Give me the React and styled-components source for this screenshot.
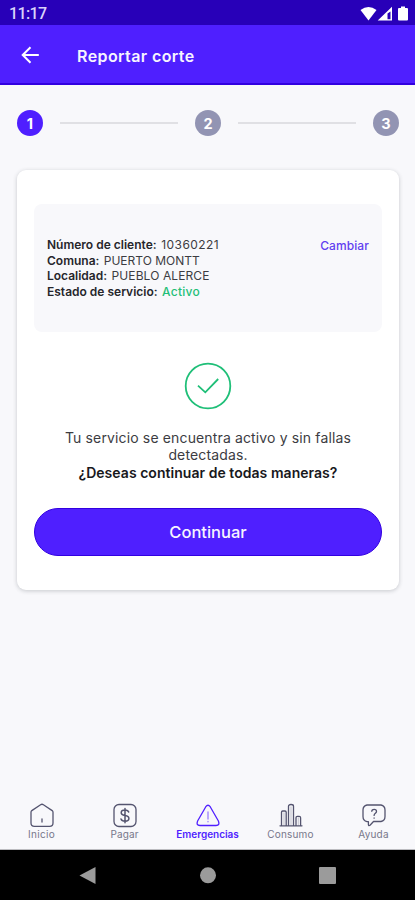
import React from 'react';
import styled, { createGlobalStyle } from 'styled-components';

const color = {
  primary: '#4f1fff',
  primaryDark: '#2800b8',
  edge: '#3200e0',
  green: '#1fbf78',
  background: '#f8f8fb',
  muted: '#9294b3',
  ink: '#3c3c42',
  icon: '#54546f',
};

const GlobalStyle = createGlobalStyle`
  * {
    box-sizing: border-box;
  }

  body {
    margin: 0;
    background: ${color.background};
    font-family: Inter, 'Liberation Sans', sans-serif;
  }
`;

const Screen = styled.div`
  display: flex;
  flex-direction: column;
  width: 415px;
  height: 900px;
  overflow: hidden;
  background: ${color.background};
`;

const StatusBar = styled.div`
  display: flex;
  justify-content: space-between;
  align-items: center;
  height: 25px;
  padding: 2px 7px 0 9px;
  background: ${color.primaryDark};
`;

const Clock = styled.span`
  color: #d9d2fa;
  font: 500 16px/20px Roboto, sans-serif;
  letter-spacing: -0.6px;
`;

const Header = styled.header`
  display: flex;
  align-items: center;
  height: 60px;
  padding: 1px 21px 0;
  background: ${color.primary};
  border-bottom: 2px solid ${color.edge};
`;

const BackButton = styled.button`
  display: flex;
  width: 56px;
  padding: 0;
  border: 0;
  background: none;
`;

const Title = styled.h1`
  margin: 2px 0 0;
  color: #f7f4ff;
  font-size: 16px;
  font-weight: 600;
  letter-spacing: 0.4px;
`;

const Content = styled.main`
  flex: 1;
  padding: 25px 16px 0 17px;
`;

const Stepper = styled.div`
  display: flex;
  align-items: center;
  height: 26px;
`;

const Step = styled.span`
  display: flex;
  justify-content: center;
  align-items: center;
  width: 26px;
  height: 26px;
  border-radius: 50%;
  background: ${({ $active }) => ($active ? color.primary : color.muted)};
  color: #fff;
  font-size: 14.5px;
  font-weight: 700;
`;

const StepLine = styled.span`
  flex: 1;
  height: 2px;
  margin: 0 17px;
  background: #e0e0e4;
`;

const Card = styled.section`
  display: flex;
  flex-direction: column;
  align-items: center;
  height: 420px;
  margin-top: 34px;
  padding: 34px 17px 0;
  border-radius: 9px;
  background: #fff;
  box-shadow: 0 1px 4px rgba(40, 50, 60, 0.24);
`;

const ServiceInfo = styled.div`
  display: flex;
  justify-content: space-between;
  align-items: flex-start;
  width: 100%;
  height: 128px;
  padding: 33px 13px 0;
  border-radius: 8px;
  background: ${color.background};
`;

const InfoLine = styled.p`
  margin: 0;
  color: ${color.ink};
  font-size: 12px;
  line-height: 15.7px;
  letter-spacing: ${({ $spacing }) => $spacing || 0}px;
  white-space: nowrap;

  b {
    margin-right: 1px;
    color: #26262b;
    font-weight: 600;
    letter-spacing: 0;
  }
`;

const Active = styled.span`
  color: ${color.green};
  font-weight: 500;
  letter-spacing: 0.3px;
`;

const ChangeLink = styled.a`
  color: #6240f0;
  font-size: 12px;
  font-weight: 500;
  line-height: 17px;
  letter-spacing: 0.1px;
`;

const CheckIcon = styled.svg`
  width: 48px;
  height: 48px;
  margin-top: 30px;
`;

const Message = styled.p`
  margin: 19px 0 0;
  color: ${color.ink};
  font-size: 14px;
  line-height: 17.3px;
  letter-spacing: 0.14px;
  text-align: center;
  white-space: nowrap;

  strong {
    color: #18181c;
    font-weight: 600;
    letter-spacing: 0.04px;
  }
`;

const ContinueButton = styled.button`
  width: 100%;
  height: 48px;
  margin-top: 27px;
  padding: 1px 0 0;
  border: 1px solid ${color.edge};
  border-radius: 24px;
  background: ${color.primary};
  color: #f7f4ff;
  font: 500 16.5px Inter, sans-serif;
`;

const TabBar = styled.nav`
  display: grid;
  grid-template-columns: repeat(5, 1fr);
  height: 48px;
  border-bottom: 1px solid #bcbcc0;
`;

const Tab = styled.a`
  display: flex;
  flex-direction: column;
  align-items: center;
  padding-top: 1px;
  color: ${({ $active }) => ($active ? color.primary : color.icon)};
`;

const TabIcon = styled.svg`
  width: 26px;
  height: 26px;
  fill: none;
  stroke: currentColor;
  stroke-width: 1.3;
  stroke-linecap: round;
  stroke-linejoin: round;
`;

const TabLabel = styled.span`
  color: ${({ $active }) => ($active ? color.primary : '#77778a')};
  font-size: 10px;
  font-weight: ${({ $active }) => ($active ? 600 : 400)};
  line-height: 11px;
  letter-spacing: ${({ $spacing }) => $spacing}px;
`;

const SystemBar = styled.div`
  display: flex;
  justify-content: center;
  height: 50px;
  background: #000;
`;

const tabs = [
  {
    label: 'Inicio',
    spacing: 0.3,
    icon: (
      <>
        <path d="M2 9.2Q2 8.2 2.8 7.6L11.6 1.7Q13 .8 14.4 1.7L23.2 7.6Q24 8.2 24 9.2V20Q24 23.4 20.6 23.4H5.4Q2 23.4 2 20Z" />
        <path d="M13 16v3" />
      </>
    ),
  },
  {
    label: 'Pagar',
    spacing: 0.1,
    icon: (
      <>
        <rect x="2" y="1.5" width="22" height="22" rx="5" />
        <path strokeWidth="1.5" d="M16.7 9.1C16.2 7.7 15 7.1 13 7.1c-2.3 0-3.8 1-3.8 2.7 0 1.8 1.5 2.4 3.8 2.8s3.9 1 3.9 2.9c0 1.7-1.6 2.7-3.9 2.7-2.2 0-3.5-.8-4-2.2M13 5.4v14.4" />
      </>
    ),
  },
  {
    label: 'Emergencias',
    spacing: 0,
    active: true,
    icon: (
      <>
        <path d="M10.8 3.7Q13 .8 15.2 3.7L23.4 18Q25.2 22.5 21 22.5H5Q.8 22.5 2.6 18Z" />
        <path opacity=".55" d="M13 9v7M13 18.3v.5" />
      </>
    ),
  },
  {
    label: 'Consumo',
    spacing: 0.2,
    icon: (
      <>
        <path d="M2 22.8h22M3.5 22.5V9.2Q3.5 8 4.7 8H7Q8.2 8 8.2 9.2V22.5M10.5 22.5V3.2Q10.5 1.5 13 1.5Q15.5 1.5 15.5 3.2V22.5M18 22.5v-7.7q0-1.4 1.4-1.4h1.8q1.4 0 1.4 1.4v7.7" />
        <path opacity=".25" d="M6 10v12M13 4v18M20.4 15v7" />
      </>
    ),
  },
  {
    label: 'Ayuda',
    spacing: 0.2,
    icon: (
      <>
        <path d="M6 2H20Q24 3 24 7V13.5Q24 17.7 20 18.5H12.5L9 22.3Q7.6 23.3 7.4 21.6V18.7H6Q2 17.7 2 13.5V7Q2 3 6 2Z" />
        <path d="M10.8 8.3C10.8 5.7 15.5 5.8 15.5 8.4c0 1.8-2.4 1.8-2.4 4M13.1 15v.2" />
      </>
    ),
  },
];

const StatusIcons = () => (
  <svg width="48" height="16" viewBox="0 0 48 16" fill="#fff">
    <path d="M.5 4Q8.5-2 16.5 4L8.5 14.5Z" />
    <path d="M32 .8V14.5H17.7ZM27.5 7.4V13.2H30.5V5.5Z" fillRule="evenodd" />
    <path d="M38 3q0-1 1-1h2V.5h4V2h2q1 0 1 1v10.5q0 1-1 1h-8q-1 0-1-1Z" />
  </svg>
);

const BackIcon = () => (
  <svg width="19" height="18" viewBox="0 0 19 18" fill="none" stroke="#fff" strokeWidth="2">
    <path d="M17.8 9H2M9.5 1.2L1.7 9L9.5 16.8" />
  </svg>
);

const App = () => (
  <Screen>
    <GlobalStyle />
    <StatusBar>
      <Clock>11:17</Clock>
      <StatusIcons />
    </StatusBar>
    <Header>
      <BackButton aria-label="Volver">
        <BackIcon />
      </BackButton>
      <Title>Reportar corte</Title>
    </Header>

    <Content>
      <Stepper>
        <Step $active>1</Step>
        <StepLine />
        <Step>2</Step>
        <StepLine />
        <Step>3</Step>
      </Stepper>

      <Card>
        <ServiceInfo>
          <div>
            <InfoLine $spacing={0.4}><b>Número de cliente:</b> 10360221</InfoLine>
            <InfoLine><b>Comuna:</b> PUERTO MONTT</InfoLine>
            <InfoLine $spacing={0.1}><b>Localidad:</b> PUEBLO ALERCE</InfoLine>
            <InfoLine><b>Estado de servicio:</b> <Active>Activo</Active></InfoLine>
          </div>
          <ChangeLink>Cambiar</ChangeLink>
        </ServiceInfo>

        <CheckIcon viewBox="0 0 48 48" fill="none" stroke={color.green} strokeWidth="1.8">
          <circle cx="24" cy="24" r="22.3" />
          <path d="M14 23.6L21.3 30.3L34.2 17" strokeWidth="1.8" />
        </CheckIcon>

        <Message>
          Tu servicio se encuentra activo y sin fallas
          <br />
          detectadas.
          <br />
          <strong>¿Deseas continuar de todas maneras?</strong>
        </Message>

        <ContinueButton>Continuar</ContinueButton>
      </Card>
    </Content>

    <TabBar>
      {tabs.map(({ label, spacing, active, icon }) => (
        <Tab key={label} $active={active}>
          <TabIcon viewBox="0 0 26 26">{icon}</TabIcon>
          <TabLabel $active={active} $spacing={spacing}>{label}</TabLabel>
        </Tab>
      ))}
    </TabBar>

    <SystemBar>
      <svg width="415" height="50" viewBox="0 0 415 50" fill="#9b9b9b">
        <path d="M79.5 25.5L95.5 17v17Z" />
        <circle cx="208" cy="25.3" r="8" />
        <rect x="319" y="17" width="17" height="17" rx="1" />
      </svg>
    </SystemBar>
  </Screen>
);

export default App;
